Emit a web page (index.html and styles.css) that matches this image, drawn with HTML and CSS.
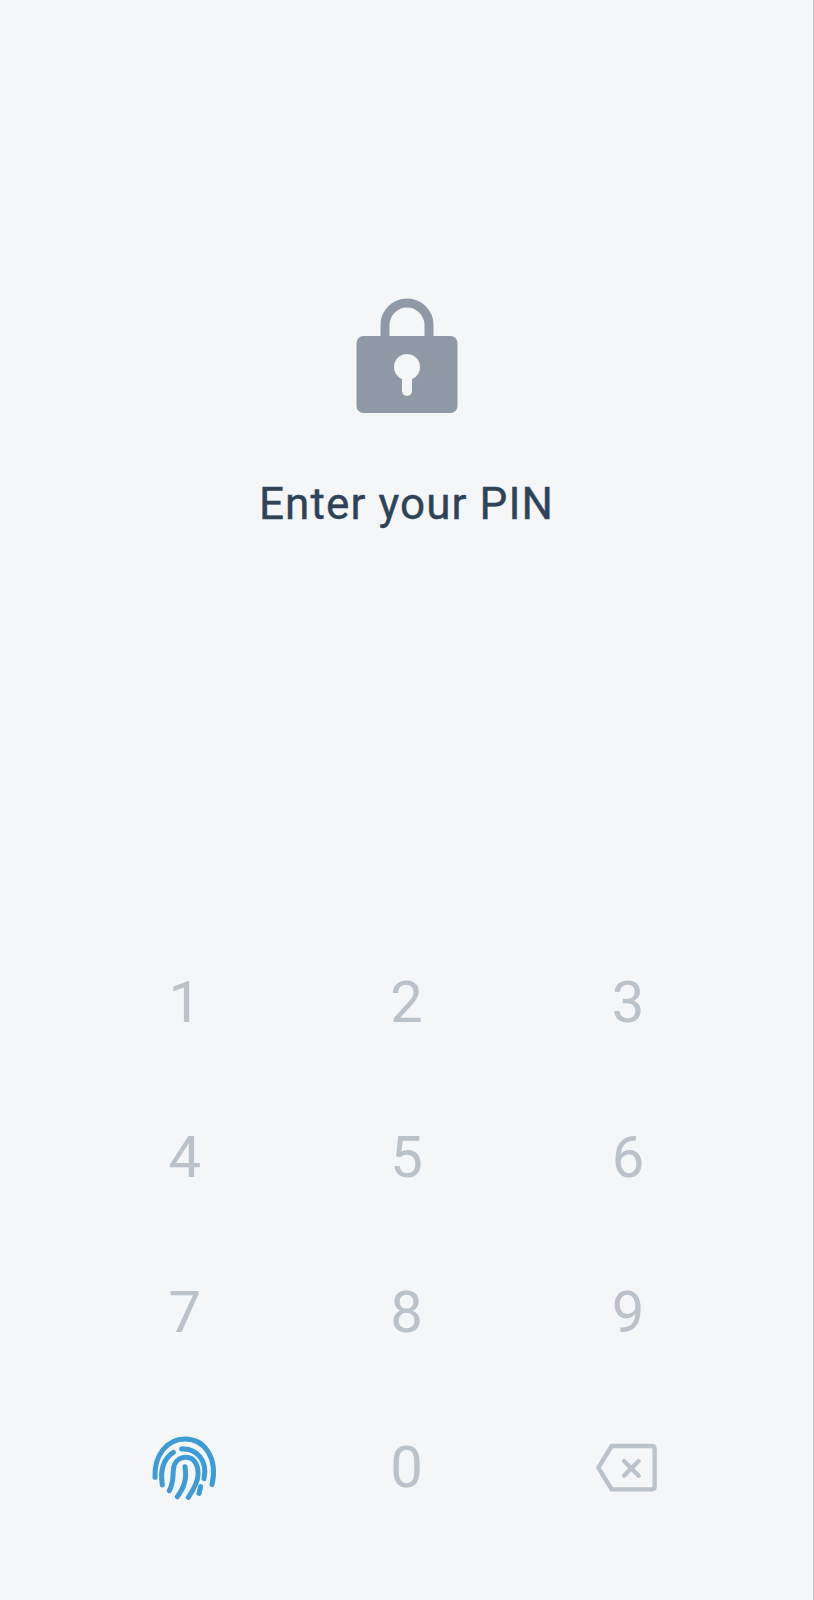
FILE: index.html
```html
<!DOCTYPE html>
<html>
<head>
	<title>Enter your PIN</title>
	<link rel="stylesheet" href="styles.css">
</head>
<body>
	<div class="screen">
		<div class="top">
			<svg class="lock" width="102" height="116" viewBox="0 0 102 116">
				<path d="M29 42V27a22 22 0 0 1 44 0V42" fill="none" stroke="#8f9aa6" stroke-width="9"/>
				<rect x="0.5" y="38" width="101" height="77" rx="7" fill="#8f9aa6"/>
				<circle cx="51" cy="69" r="13" fill="#f4f6f8"/>
				<rect x="46" y="72" width="10" height="26" rx="5" fill="#f4f6f8"/>
			</svg>
			<h1 class="title">Enter your PIN</h1>
		</div>
		<div class="keypad">
			<button class="key">1</button>
			<button class="key">2</button>
			<button class="key">3</button>
			<button class="key">4</button>
			<button class="key">5</button>
			<button class="key">6</button>
			<button class="key">7</button>
			<button class="key">8</button>
			<button class="key">9</button>
			<button class="key">
				<svg width="110" height="90" viewBox="0 6 330 270" fill="none" stroke="#3d9bd8" stroke-width="15" stroke-linecap="round">
					<path d="M75 172C72 105 112 57 165 57C225 57 264 115 246 194"/>
					<path d="M97 195C90 150 102 115 130 97"/>
					<path d="M155 87C200 84 234 122 222 176"/>
					<path d="M118 212C132 185 128 168 130 150C132 125 148 112 168 112C192 112 206 135 204 165C203 190 188 212 175 232"/>
					<path d="M165 140C172 180 160 205 142 230"/>
					<path d="M212 200L207 220"/>
				</svg>
			</button>
			<button class="key">0</button>
			<button class="key">
				<svg class="back" width="100" height="90" viewBox="0 3 300 270" fill="none" stroke="#bcc2ca" stroke-width="13" stroke-linejoin="round" stroke-linecap="round">
					<path d="M95 75H215Q224 75 224 84V196Q224 205 215 205H95L55 140Z"/>
					<path d="M132 120L176 164M176 120L132 164"/>
				</svg>
			</button>
		</div>
	</div>
</body>
</html>
```

FILE: styles.css
```css
html, body{
	margin: 0;
	padding: 0;
}
body{
	background-color: #f4f6f8;
	font-family: Roboto, "Liberation Sans", sans-serif;
}
.screen{
	width: 813px;
	height: 1600px;
	border-right: 1px solid #c4c6c9;
	display: flex;
	flex-direction: column;
	justify-content: space-between;
	overflow: hidden;
}
.top{
	padding-top: 298px;
	display: flex;
	flex-direction: column;
	align-items: center;
}
.lock{
	display: block;
}
.title{
	margin: 62px 0 0 0;
	font-size: 44px;
	line-height: 56px;
	font-weight: 400;
	letter-spacing: 1.1px;
	color: #2e4358;
	-webkit-text-stroke: 0.4px #2e4358;
}
.keypad{
	padding: 0 74px 56px 74px;
	display: grid;
	grid-template-columns: repeat(3, 1fr);
	grid-auto-rows: 155px;
}
.key{
	border: none;
	background: none;
	padding: 0;
	display: flex;
	align-items: center;
	justify-content: center;
	font-family: inherit;
	font-size: 58px;
	font-weight: 400;
	color: #bcc2ca;
}
.back{
	margin-left: 4px;
}
```
